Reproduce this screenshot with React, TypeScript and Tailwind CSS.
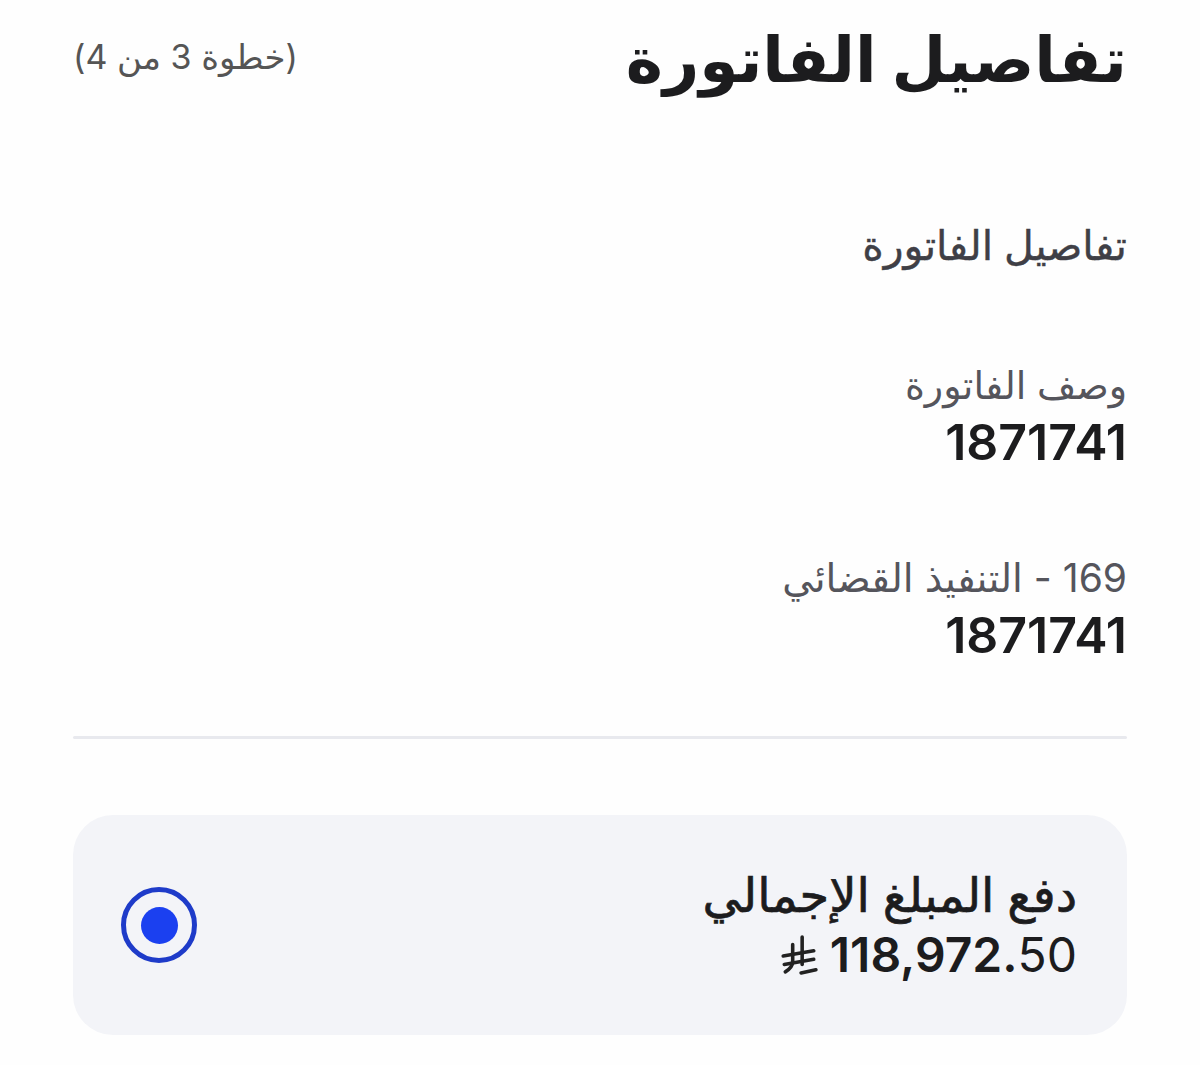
import React from "react";

function RiyalIcon() {
  return (
    <svg width="38" height="40" viewBox="0 0 36 38" fill="none" stroke="#222" strokeWidth="3.4" strokeLinecap="round" strokeLinejoin="round" aria-hidden="true">
      <path d="M12 9 L12 25 Q12 31 5 35" />
      <path d="M21 2 L21 28" />
      <path d="M3 20 L32 15" />
      <path d="M4 28 L32 23" />
      <path d="M20 36 L34 33" />
    </svg>
  );
}

export default function App() {
  const font = { fontFamily: 'Inter, "DejaVu Sans", sans-serif' };
  return (
    <div dir="rtl" style={font} className="min-h-[1065px] w-full bg-[#fefefe] px-[73px] pt-[14px] text-[#1c1c1e]">
      <div className="flex items-center justify-between">
        <h1 className="text-[63px] font-bold leading-[90px] text-[#1c1c1e]">تفاصيل الفاتورة</h1>
        <span className="text-[34px] text-[#555] leading-[40px] pb-[4px]">(خطوة 3 من 4)</span>
      </div>

      <h2 className="mt-[113px] text-[41px] font-medium leading-[56px] text-[#3f3f46] [-webkit-text-stroke:0.4px_#3f3f46]">تفاصيل الفاتورة</h2>

      <div className="mt-[85px] flex flex-col">
        <span className="text-[38px] leading-[54px] text-[#55555c]">وصف الفاتورة</span>
        <span className="text-[50px] font-semibold leading-[60px] text-[#1c1c1e]">1871741</span>
      </div>

      <div className="mt-[79px] flex flex-col">
        <span className="text-[39px] leading-[54px] text-[#55555c]">169 - التنفيذ القضائي</span>
        <span className="text-[50px] font-semibold leading-[60px] text-[#1c1c1e]">1871741</span>
      </div>

      <div className="mt-[71px] h-[3px] rounded-full bg-[#e8e9ee]" />

      <div className="mt-[76px] flex h-[220px] items-center justify-between rounded-[40px] bg-[#f3f4f8] pr-[50px] pl-[48px]">
        <div className="flex flex-col">
          <span className="text-[48px] font-medium leading-[60px] text-[#1c1c1e] [-webkit-text-stroke:0.7px_#1c1c1e]">دفع المبلغ الإجمالي</span>
          <span dir="ltr" className="flex items-center justify-end gap-[12px] text-[48px] leading-[60px] text-[#1c1c1e]">
            <RiyalIcon />
            <span><span className="font-semibold">118,972.</span><span>50</span></span>
          </span>
        </div>
        <div className="flex h-[76px] w-[76px] items-center justify-center rounded-full border-[5px] border-[#1e3bc9]">
          <div className="h-[37px] w-[37px] rounded-full bg-[#1b40f0]" />
        </div>
      </div>
    </div>
  );
}
